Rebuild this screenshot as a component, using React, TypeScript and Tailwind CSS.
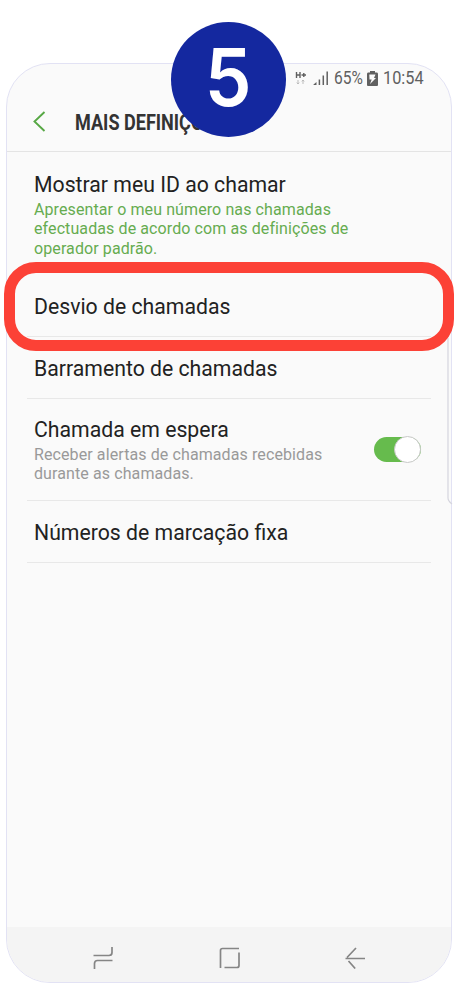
import clsx from "clsx";

interface SettingInterface {
    title: string;
    description?: string[];
    className: string;
    active?: boolean;
    toggle?: boolean;
}

const settings: SettingInterface[] = [
    {
        title: "Mostrar meu ID ao chamar",
        description: ["Apresentar o meu número nas chamadas", "efectuadas de acordo com as definições de", "operador padrão."],
        className: "h-[123px] pt-[20px]",
        active: true,
    },
    { title: "Desvio de chamadas", className: "h-[62px] pt-[19px] border-b" },
    { title: "Barramento de chamadas", className: "h-[62px] pt-[19px] border-b" },
    {
        title: "Chamada em espera",
        description: ["Receber alertas de chamadas recebidas", "durante as chamadas."],
        className: "h-[102px] pt-[18px] border-b",
        toggle: true,
    },
    { title: "Números de marcação fixa", className: "h-[62px] pt-[19px] border-b" },
];

const StatusBar = () => {
    return (
        <div className="flex h-[28px] items-center justify-end pr-[27px] text-[#606060]">
            <svg width="35" height="18" viewBox="0 0 35 18" className="mr-[4px]" fill="none">
                <path d="M1.500 3v6M5 3v6M1.500 6H5M6.500 6h4.500M8.800 4v4" stroke="#606060" strokeWidth="1.400" />
                <path d="M3 11v4M1.800 13.600 3 15l1.200-1.400M8 15v-4M6.800 12.400 8 11l1.200 1.400" stroke="#b5b5b5" strokeWidth="0.900" />
                <path d="M18.500 16v-.6L21.500 13v3z" fill="#606060" />
                <path d="M24.400 16v-5.500M28.300 16V6.500M32.200 16V2.500" stroke="#606060" strokeWidth="1.500" />
            </svg>
            <div className="w-[29px]">
                <span className="inline-block origin-left scale-x-[0.84] text-[18.500px] leading-[28px]">65%</span>
            </div>
            <svg width="11" height="15" viewBox="0 0 11 15" className="ml-[4px]">
                <path d="M3 0h5v1.500h2Q11 1.500 11 3v11q0 1-1 1H1q-1 0-1-1V3Q0 1.500 1 1.500h2z" fill="#606060" />
                <path d="M2.300 3.600h6.200L7 7h2l-6 6 1.700-4.400H2.500z" fill="#fafafa" />
            </svg>
            <div className="ml-[5px] w-[41px]">
                <span className="inline-block origin-left scale-x-[0.88] text-[18.500px] leading-[28px]">10:54</span>
            </div>
        </div>
    );
};

const Toggle = () => {
    return (
        <div className="mt-[19px] mr-[10px] flex h-[27px] w-[47px] items-center">
            <div className="flex h-[25px] w-full items-center justify-end rounded-full bg-[#66bb4d]">
                <div className="size-[27px] shrink-0 rounded-full border border-[#c8c8c8] bg-white" />
            </div>
        </div>
    );
};

const SettingItem = ({ setting }: { setting: SettingInterface }) => {
    return (
        <li className={clsx("flex justify-between border-[#e8e8e8] pl-[7px]", setting.className)}>
            <div className="whitespace-nowrap">
                <h2 className="origin-left scale-x-[0.965] text-[22px] leading-[26px] text-[#222]">{setting.title}</h2>
                {setting.description && (
                    <p
                        className={clsx(
                            "pt-[2px] text-[16px] leading-[19.300px] tracking-[0.1px]",
                            setting.active ? "text-[#66ac50]" : "text-[#999]"
                        )}
                    >
                        {setting.description.map((line) => (
                            <span key={line} className="block">
                                {line}
                            </span>
                        ))}
                    </p>
                )}
            </div>
            {setting.toggle && <Toggle />}
        </li>
    );
};

const NavigationBar = () => {
    return (
        <nav className="flex h-[55px] items-center justify-between bg-[#f4f4f4] pt-[6px] pr-[85px] pl-[86px] text-[#858585]">
            <svg width="21" height="23" viewBox="0 0 21 23" fill="none" stroke="currentColor" strokeWidth="1.700">
                <path d="M.5 9.500H16q3 0 3-3V1M19.500 14.500H4.500q-3 0-3 3V23" />
            </svg>
            <svg width="22" height="22" viewBox="0 0 22 22" fill="none" stroke="currentColor" strokeWidth="1.700">
                <path d="M1.500 21V3.500q0-2 2-2H20M5.500 20.500h12.500q2 0 2-2V5.500" />
            </svg>
            <svg width="21" height="22" viewBox="0 0 21 22" fill="none" stroke="currentColor" strokeWidth="1.700">
                <path d="M11 1 2 10.500M.5 11.500h19.500M3.500 14l6.700 7.500" />
            </svg>
        </nav>
    );
};

const App = () => {
    return (
        <main className="relative h-[983px] w-[455px] overflow-hidden bg-white pt-[63px] pl-[6px] font-['Roboto',sans-serif]">
            <section className="flex h-[920px] w-[446px] flex-col overflow-hidden rounded-[44px] border border-[#e2e2f4] bg-[#fafafa]">
                <StatusBar />
                <header className="flex h-[60px] shrink-0 items-center border-b border-[#e4e4e4] pl-[26px]">
                    <svg width="13" height="21" viewBox="0 0 13 21" fill="none" stroke="#57a845" strokeWidth="1.900">
                        <path d="M11.500 1 1.500 10.500l10 9.500" />
                    </svg>
                    <h1 className="ml-[29px] origin-left scale-x-[0.84] pt-[4px] text-[21.500px] font-bold whitespace-nowrap text-[#333]">
                        MAIS DEFINIÇÕES
                    </h1>
                </header>
                <ul className="flex flex-1 flex-col pr-[20px] pl-[20px]">
                    {settings.map((item) => (
                        <SettingItem key={item.title} setting={item} />
                    ))}
                </ul>
                <NavigationBar />
            </section>

            {/* edge panel handle */}
            <svg className="absolute top-[338px] left-[446px]" width="7" height="168" viewBox="0 0 7 168" fill="none">
                <path d="M2 0v160q0 3 4 6" stroke="#d5d5de" strokeWidth="1.200" />
            </svg>

            <div className="absolute top-[262px] left-[4px] h-[89px] w-[450px] rounded-[32px] border-[11px] border-[#fc4136]" />
            <div className="absolute top-[22px] left-[171px] flex size-[115px] items-center justify-center rounded-full bg-[#14289f] pb-[5px] font-['Inter',sans-serif] text-[80px] leading-none font-semibold text-white">
                <span className="scale-x-[0.93]">5</span>
            </div>
        </main>
    );
};

export default App;
